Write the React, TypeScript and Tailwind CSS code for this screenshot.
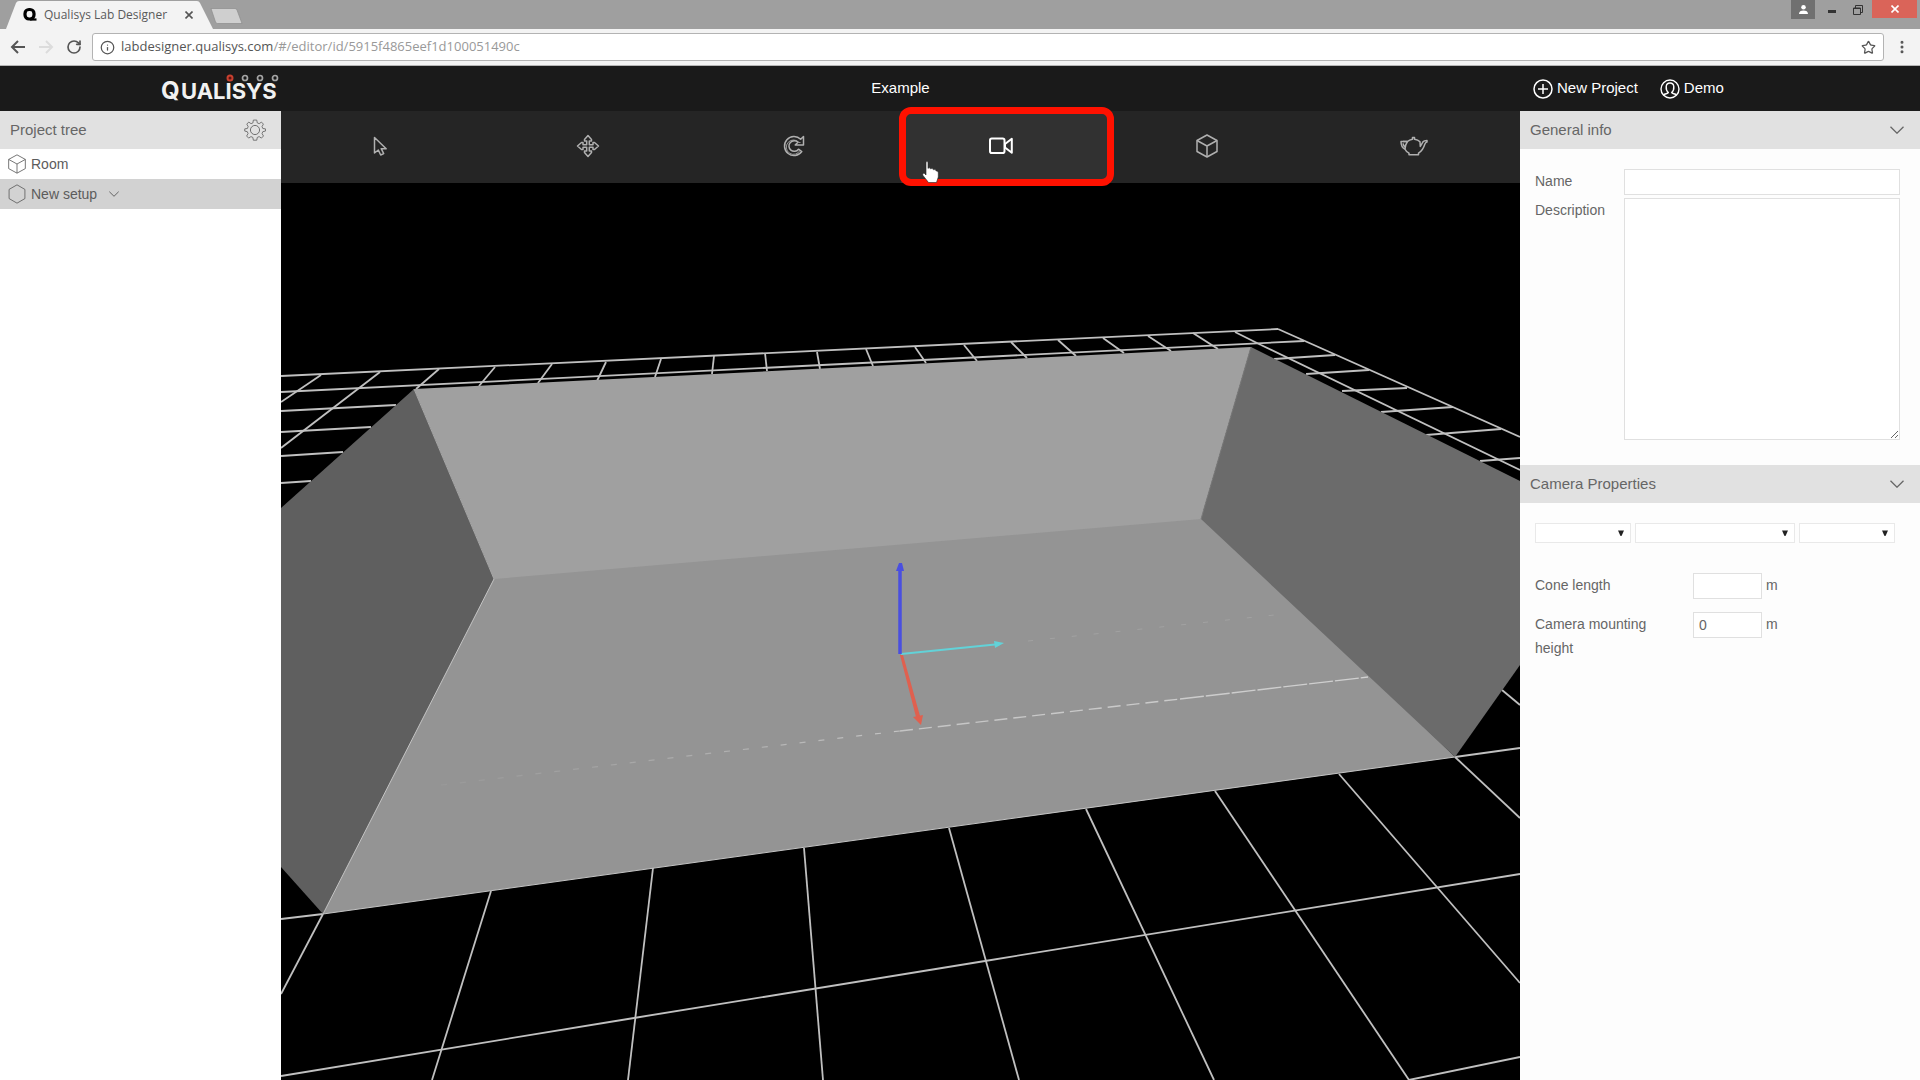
import { useState } from "react";
import type { ReactNode } from "react";
import { Info, MoreVertical, RotateCw, Star } from "lucide-react";

type Segment = [number, number, number, number];

// Floor grid lines, in the same space as the room polygons
const gridLines: Segment[] = [
  // far rows
  [281, 376, 1278, 329],
  [281, 392, 1304, 341],
  [281, 411, 396, 405],
  [281, 432, 371, 427],
  [281, 456, 343, 452],
  [281, 483, 311, 481],
  // far columns
  [321, 375, 281, 402],
  [380, 372, 281, 448],
  [439, 369, 416, 389],
  [495, 367, 479, 386],
  [552, 364, 538, 383],
  [606, 362, 597, 381],
  [661, 359, 655, 377],
  [714, 356, 712, 374],
  [765, 353, 767, 371],
  [817, 352, 820, 369],
  [866, 349, 873, 366],
  [915, 347, 926, 363],
  [964, 345, 977, 361],
  [1011, 342, 1027, 358],
  [1058, 340, 1076, 356],
  [1103, 338, 1124, 353],
  [1148, 336, 1171, 351],
  [1193, 333, 1218, 349],
  [1235, 332, 1261, 345],
  // right side
  [1278, 329, 1520, 437],
  [1261, 345, 1520, 470],
  [1274, 359, 1335, 355],
  [1306, 374, 1369, 370],
  [1342, 391, 1407, 388],
  [1381, 412, 1453, 407],
  [1426, 435, 1501, 429],
  [1480, 461, 1520, 458],
  [1502, 690, 1520, 705],
  // near columns
  [323, 914, 281, 994],
  [491, 891, 432, 1080],
  [653, 868, 628, 1080],
  [804, 848, 823, 1080],
  [949, 828, 1019, 1080],
  [1086, 809, 1214, 1080],
  [1215, 791, 1409, 1080],
  [1339, 774, 1520, 983],
  [1455, 757, 1520, 818],
  // near rows
  [281, 919, 323, 914],
  [1455, 757, 1520, 748],
  [281, 1076, 634, 1018],
  [634, 1018, 985, 961],
  [985, 961, 1520, 874],
  [1409, 1080, 1520, 1057],
];

const Scene = () => (
  <svg
    viewBox="281 183 1239 897"
    preserveAspectRatio="xMidYMid slice"
    className="block h-full w-full bg-black"
    role="img"
    aria-label="Room view"
  >
    <defs>
      <linearGradient id="seam" gradientUnits="userSpaceOnUse" x1="441" y1="785" x2="1368" y2="677">
        <stop offset="0" stopColor="#b4b4b4" stopOpacity="0.15" />
        <stop offset="0.5" stopColor="#c4c4c4" />
        <stop offset="1" stopColor="#d0d0d0" />
      </linearGradient>
    </defs>
    <g stroke="#c0c0c0" strokeWidth="1.8">
      {gridLines.map(([x1, y1, x2, y2], i) => (
        <line key={i} x1={x1} y1={y1} x2={x2} y2={y2} />
      ))}
    </g>
    {/* the floor reaches under the walls so that no seam shows */}
    <polygon points="484,570 1201,509 1211,519 1455,757 323,914" fill="#949494" />
    <polygon points="414,389 1251,347 1201,519 494,579" fill="#a0a0a0" />
    <polygon points="281,508 414,389 494,579 323,914 281,867" fill="#5f5f5f" />
    <polygon points="1251,347 1520,481 1520,665 1455,757 1201,519" fill="#6b6b6b" />
    <g fill="none" stroke="#c4c4c4" strokeWidth="1">
      <path d="M494 579 323 914 1455 757" />
      <path d="M414 389 494 579" stroke="#a8a8a8" />
      <path d="M1251 347 1201 519" stroke="#7c7c7c" />
    </g>
    <path d="M441 785 900 731" stroke="url(#seam)" strokeWidth="1.2" strokeDasharray="6 13" />
    <path d="M900 731 1180 699" stroke="url(#seam)" strokeWidth="1.4" strokeDasharray="13 6" />
    <path d="M1180 699 1368 677" stroke="url(#seam)" strokeWidth="1.4" strokeDasharray="24 2" />
    <path d="M1028 641 1284 614" stroke="#a2a2a2" strokeWidth="1" strokeDasharray="5 17" />
    <path d="M901 654 1000 644" stroke="#62d2d8" strokeWidth="2" />
    <path d="M994 641 1004 643 995 648Z" fill="#62d2d8" />
    <path d="M900 655 903 655 920 716 916 717Z" fill="#e0604f" />
    <path d="M913 717 923 715 921 725Z" fill="#e0604f" />
    <path d="M900 569V654" stroke="#4a4fe0" strokeWidth="3.5" />
    <path d="M896 571 899 563H902L904 571Z" fill="#4a4fe0" />
  </svg>
);

const CubeIcon = ({ className }: { className: string }) => (
  <svg viewBox="0 0 24 24" className={className} fill="none" stroke="currentColor" strokeLinejoin="round">
    <path d="M12 1 22 6.5V17.5L12 23 2 17.5V6.5Z" />
    <path d="M2 6.5 12 12 22 6.5M12 12V23" />
  </svg>
);

const HexagonIcon = () => (
  <svg viewBox="0 0 24 24" className="h-5 w-5" fill="none" stroke="currentColor" strokeLinejoin="round">
    <path d="M12 1 21.500 6.500V17.500L12 23 2.500 17.500V6.500Z" />
  </svg>
);

const GearIcon = () => (
  <svg viewBox="0 0 24 24" className="h-[22px] w-[22px]" fill="none" stroke="currentColor" strokeLinejoin="round">
    <circle cx="12" cy="12" r="5" />
    <path d="M10 1h4l.6 3.200 2.200.9 2.700-1.800 2.300 2.300-1.600 2.800.9 2.200 3.100.4v2.500l-3.100.7-.9 2.200 1.700 2.700-2.400 2.400-2.700-1.700-2.200.9-.6 3.200h-4l-.6-3.200-2.200-.9-2.700 1.700-2.400-2.400 1.700-2.700-.9-2.200L-.1 13.500V11l3.100-.4.9-2.200L2.300 5.600l2.300-2.300 2.700 1.800 2.200-.9Z" transform="translate(.9 .2) scale(.93 .96)" />
  </svg>
);

const ChevronIcon = ({ className }: { className: string }) => (
  <svg viewBox="0 0 14 8" className={className} fill="none" stroke="currentColor" strokeWidth="1.300">
    <path d="M.5.8 7 7.200 13.500.8" />
  </svg>
);

const PointerIcon = () => (
  <svg viewBox="0 0 24 24" className="h-6 w-6" fill="none" stroke="currentColor" strokeWidth="1.500" strokeLinejoin="round">
    <path d="M5.500 3.500V19l3.800-3 2.400 5 3-1.400-2.500-4.900h5Z" />
  </svg>
);

const MoveIcon = () => (
  <svg viewBox="0 0 24 24" className="h-6 w-6" fill="none" stroke="currentColor" strokeWidth="1.500" strokeLinejoin="round">
    <path d="M12 1.500 15.500 5.500V7H13.300V10.700H17V8.500H18.500L22.500 12 18.500 15.500H17V13.300H13.300V17H15.500V18.500L12 22.500 8.500 18.500V17H10.700V13.300H7V15.500H5.500L1.500 12 5.500 8.500H7V10.700H10.700V7H8.500V5.500Z" />
  </svg>
);

const RotateIcon = () => (
  <svg viewBox="0 0 24 24" className="h-6 w-6" fill="none" stroke="currentColor" strokeWidth="1.500" strokeLinejoin="round">
    <path d="M21.500 2.500V11H13.200L16 8.300A5.300 5.300 0 1 0 16.500 15.200L19.800 17.500A9.500 9.500 0 1 1 18.700 5.300Z" />
    <path d="M18.500 8.500H17A7.200 7.200 0 1 0 18 16.300" strokeWidth=".8" />
  </svg>
);

const CameraIcon = () => (
  <svg viewBox="0 0 26 24" className="h-6 w-[26px]" fill="none" stroke="currentColor" strokeWidth="2" strokeLinejoin="round">
    <rect x="2" y="4.500" width="14.500" height="14.500" rx="1.800" />
    <path d="M17 10 23.800 4.800V18.700L17 13.500Z" />
  </svg>
);

const TeapotIcon = () => (
  <svg viewBox="0 0 28 24" className="h-6 w-7" fill="none" stroke="currentColor" strokeWidth="1.500" strokeLinejoin="round">
    <path d="M7.500 7.500C9 6 10.500 5.500 12.500 5.200V3.500H14.500V5.200C17 5.500 18.500 6.200 20 7.800L20.300 12.500 23 7.800C23.700 6.800 24.500 6.500 27 6.500V8C25.500 8.300 25.200 9 24.800 10.200 23.500 14.500 21.800 17 18.500 19.200V20.700H9V19.200C6.800 18 5.800 17 5 15.200 2.500 14 1 11 1 7.500Z" />
    <path d="M7.500 7.500C6 9.500 5.200 12 5 15M3 9.300C3.300 11 3.800 12 4.800 13M7.500 7.500H3" />
  </svg>
);

const HandCursor = () => (
  <svg viewBox="0 0 17 22" className="h-[22px] w-[17px]" fill="white" stroke="#222" strokeWidth=".6">
    <path d="M4 1.500C4 .3 6 .3 6 1.500V7.500C6.500 6.500 8.500 6.700 8.700 8 9.500 7.200 11.300 7.500 11.500 8.800 12.500 8.300 14 8.800 14.200 10 15.500 10 16.300 10.600 16.300 12V16L14.500 21.500H6.500L1 14.500C.2 13 1.200 11.800 2.500 12.500L4 14Z" />
  </svg>
);

const Logo = () => (
  <svg viewBox="0 0 120 38" className="h-[38px] w-[120px] overflow-visible" role="img" aria-label="Qualisys">
    <g fill="#f1f1f1" fontFamily="Inter, sans-serif" fontWeight="700">
      <text x="0" y="29" fontSize="24">Q</text>
      <text x="20" y="29" fontSize="22">UALISYS</text>
    </g>
    <circle cx="69" cy="8" r="2.500" fill="#5a1512" stroke="#c8402f" strokeWidth="2" />
    <g fill="none" stroke="#a5a5a5" strokeWidth="1.700">
      <circle cx="84" cy="8" r="2.500" />
      <circle cx="99" cy="8" r="2.500" />
      <circle cx="114" cy="8" r="2.500" />
    </g>
  </svg>
);

const BrowserChrome = () => (
  <div className="font-['Open_Sans',sans-serif]">
    <div className="flex h-[29px] items-end justify-between bg-[#9f9f9f]">
      <div className="flex h-full items-end">
        <div className="relative ml-[6px] h-[28px] w-[207px]">
          <svg viewBox="0 0 207 28" className="absolute inset-0 h-full w-full" aria-hidden="true">
            <path d="M0 28 10 2Q11 0 13 0H191Q193 0 194 2L207 28Z" fill="#f3f3f3" />
          </svg>
          <div className="relative flex h-full items-center pl-[16px] pr-[20px]">
            <svg viewBox="0 0 16 16" className="h-4 w-4" fill="none" stroke="black" strokeWidth="3.200" aria-hidden="true">
              <rect x="3" y="2.500" width="9" height="9.500" rx="4" />
              <path d="M8 12.500H14.500" strokeWidth="2.200" />
            </svg>
            <span className="ml-[6px] text-xs text-[#5a5a5a]">Qualisys Lab Designer</span>
            <button type="button" aria-label="Close tab" className="ml-auto text-[#555]">
              <svg viewBox="0 0 8 8" className="h-2 w-2" stroke="currentColor" strokeWidth="1.600">
                <path d="M.5.5 7.500 7.500M7.500.5.5 7.500" />
              </svg>
            </button>
          </div>
        </div>
        <button type="button" aria-label="New tab" className="mb-[5px] -ml-[3px]">
          <svg viewBox="0 0 33 16" className="block h-4 w-[33px]">
            <path d="M1 .5H25Q26.500.5 27 2L32 15.500H7.500Q6 15.500 5.500 14Z" fill="#cfcfcf" stroke="#8c8c8c" strokeWidth=".7" />
          </svg>
        </button>
      </div>
      <div className="flex h-full items-start pr-[3px]">
        <button type="button" aria-label="Profile" className="flex h-[19px] w-6 items-center justify-center bg-[#707070]">
          <svg viewBox="0 0 10 10" className="h-[9px] w-[9px]" fill="white">
            <circle cx="5" cy="2.500" r="2.500" />
            <path d="M0 10C0 7 2 6 5 6S10 7 10 10Z" />
          </svg>
        </button>
        <button type="button" aria-label="Minimize" className="flex h-[19px] w-[33px] items-center justify-center pt-1">
          <span className="h-[3px] w-2 bg-[#333]" />
        </button>
        <button type="button" aria-label="Restore" className="flex h-[19px] w-5 items-center justify-center">
          <svg viewBox="0 0 10 10" className="h-[10px] w-[10px]" fill="none" stroke="#333">
            <path d="M.500 3H7.500V9.500H.500ZM.500 3.500H7.500M2.500 3V.500H9.500V7.500H7.500" />
          </svg>
        </button>
        <button type="button" aria-label="Close" className="ml-1 flex h-[18px] w-[45px] items-center justify-center bg-[#da6459]">
          <svg viewBox="0 0 8 8" className="h-2 w-2" stroke="white" strokeWidth="1.600">
            <path d="M.5.5 7.500 7.500M7.500.5.5 7.500" />
          </svg>
        </button>
      </div>
    </div>
    <div className="flex h-[37px] items-center border-b border-[#b5b5b5] bg-[#f3f3f3]">
      <button type="button" aria-label="Back" className="ml-[10px] text-[#555]">
        <svg viewBox="0 0 16 14" className="h-[14px] w-4" fill="none" stroke="currentColor" strokeWidth="2">
          <path d="M15 7H2M8 1 2 7 8 13" />
        </svg>
      </button>
      <button type="button" aria-label="Forward" className="ml-3 text-[#dcdcdc]">
        <svg viewBox="0 0 16 14" className="h-[14px] w-4" fill="none" stroke="currentColor" strokeWidth="2">
          <path d="M1 7H14M8 1 14 7 8 13" />
        </svg>
      </button>
      <button type="button" aria-label="Reload" className="ml-3 text-[#555]">
        <RotateCw className="h-4 w-4" strokeWidth={2.5} />
      </button>
      <div className="ml-[10px] flex h-7 flex-1 items-center rounded-[3px] border border-[#b3b3b3] bg-white px-[7px]">
        <Info className="h-[15px] w-[15px] text-[#555]" strokeWidth={2} />
        <div className="ml-[6px] flex-1 text-[13px] text-[#999]">
          <span className="text-[#555]">labdesigner.qualisys.com</span>/#/editor/id/5915f4865eef1d100051490c
        </div>
        <button type="button" aria-label="Bookmark" className="text-[#555]">
          <Star className="h-[15px] w-[15px]" strokeWidth={2} />
        </button>
      </div>
      <button type="button" aria-label="Menu" className="mx-[10px] text-[#555]">
        <MoreVertical className="h-4 w-4" strokeWidth={2.500} />
      </button>
    </div>
  </div>
);

const tools: { id: string; label: string; icon: ReactNode }[] = [
  { id: "select", label: "Select", icon: <PointerIcon /> },
  { id: "move", label: "Move", icon: <MoveIcon /> },
  { id: "rotate", label: "Rotate", icon: <RotateIcon /> },
  { id: "camera", label: "Add camera", icon: <CameraIcon /> },
  { id: "box", label: "Add box", icon: <CubeIcon className="h-6 w-6 stroke-[1.5]" /> },
  { id: "object", label: "Add object", icon: <TeapotIcon /> },
];

const Toolbar = () => {
  const [hovered, setHovered] = useState("camera");

  return (
    <div className="grid h-[72px] grid-cols-6 bg-[#252525]">
      {tools.map((tool) => (
        <button
          key={tool.id}
          type="button"
          aria-label={tool.label}
          onMouseEnter={() => setHovered(tool.id)}
          className={
            tool.id === hovered
              ? "relative flex items-center justify-center bg-[#313131] pr-[6px] pb-[3px] text-white"
              : "relative flex items-center justify-center pr-[6px] pb-[3px] text-[#b0b0b0]"
          }
        >
          {tool.icon}
          {tool.id === "camera" && (
            <>
              <span className="absolute -top-1 -right-[7px] -bottom-[3px] -left-[2px] z-10 rounded-xl border-[7px] border-[#ff1100]" />
              <span className="absolute bottom-0 left-[21px] z-20">
                <HandCursor />
              </span>
            </>
          )}
        </button>
      ))}
    </div>
  );
};

const PanelHeader = ({ title }: { title: string }) => (
  <h2>
    <button
      type="button"
      className="flex h-[38px] w-full items-center justify-between bg-[#e1e1e1] pr-4 pl-[10px] text-[15px] text-[#666]"
    >
      {title}
      <ChevronIcon className="h-2 w-[14px]" />
    </button>
  </h2>
);

const SelectBox = ({ label, className }: { label: string; className: string }) => (
  <div className={className}>
    <select aria-label={label} className="block h-5 w-full appearance-none border border-[#e9e9e9] bg-white" />
    <svg viewBox="0 0 6 6" className="pointer-events-none absolute top-[7px] right-[7px] h-[6px] w-[6px]" fill="#222">
      <path d="M0 .5H6L3.500 6H2.500Z" />
    </svg>
  </div>
);

const PropertiesPanel = () => {
  const [name, setName] = useState("");
  const [description, setDescription] = useState("");
  const [coneLength, setConeLength] = useState("");
  const [mountingHeight, setMountingHeight] = useState("0");

  return (
    <aside className="w-[400px] shrink-0 bg-[#fdfdfd] text-sm text-[#666]">
      <PanelHeader title="General info" />
      <div className="flex flex-col gap-[3px] pt-5 pr-5 pb-[25px] pl-[15px]">
        <div className="flex">
          <label htmlFor="name" className="w-[89px] leading-6">
            Name
          </label>
          <input
            id="name"
            value={name}
            onChange={(e) => setName(e.target.value)}
            className="h-[26px] min-w-0 flex-1 border border-[#e0e0e0] bg-white px-[5px]"
          />
        </div>
        <div className="flex">
          <label htmlFor="description" className="w-[89px] leading-6">
            Description
          </label>
          <textarea
            id="description"
            value={description}
            onChange={(e) => setDescription(e.target.value)}
            className="block h-[242px] min-w-0 flex-1 resize border border-[#e0e0e0] bg-white px-[5px]"
          />
        </div>
      </div>

      <PanelHeader title="Camera Properties" />
      <div className="pt-5 pl-[15px]">
        <div className="flex gap-1">
          <SelectBox label="Camera family" className="relative w-24" />
          <SelectBox label="Camera model" className="relative w-40" />
          <SelectBox label="Lens" className="relative w-24" />
        </div>
        <div className="mt-[30px] flex flex-col gap-[13px]">
          <div className="flex">
            <label htmlFor="cone" className="mr-7 w-[130px] leading-6">
              Cone length
            </label>
            <input
              id="cone"
              value={coneLength}
              onChange={(e) => setConeLength(e.target.value)}
              className="h-[26px] w-[69px] border border-[#e0e0e0] bg-white px-[5px]"
            />
            <span className="ml-1 leading-6">m</span>
          </div>
          <div className="flex">
            <label htmlFor="mounting" className="mr-7 w-[130px] leading-6">
              Camera mounting height
            </label>
            <input
              id="mounting"
              value={mountingHeight}
              onChange={(e) => setMountingHeight(e.target.value)}
              className="h-[26px] w-[69px] border border-[#e0e0e0] bg-white px-[5px]"
            />
            <span className="ml-1 leading-6">m</span>
          </div>
        </div>
      </div>
    </aside>
  );
};

const ProjectTree = () => (
  <aside className="w-[281px] shrink-0 bg-white text-sm text-[#5c5c5c]">
    <div className="flex h-[38px] items-center justify-between bg-[#e1e1e1] pr-[15px] pl-[10px] text-[15px] text-[#666]">
      <h2>Project tree</h2>
      <button type="button" aria-label="Settings">
        <GearIcon />
      </button>
    </div>
    <ul>
      <li>
        <button type="button" className="flex h-[30px] w-full items-center gap-1 pl-[7px]">
          <CubeIcon className="h-5 w-5" />
          Room
        </button>
      </li>
      <li>
        <button type="button" className="flex h-[30px] w-full items-center gap-1 bg-[#d2d2d2] pl-[7px]">
          <HexagonIcon />
          New setup
          <ChevronIcon className="ml-2 h-[6px] w-[10px]" />
        </button>
      </li>
    </ul>
  </aside>
);

const AppHeader = () => (
  <header className="flex h-[45px] items-center bg-[#1a1a1a] text-[15px] text-white">
    <div className="flex w-[281px] shrink-0 justify-end">
      <Logo />
    </div>
    <h1 className="flex-1 text-center">Example</h1>
    <nav className="flex w-[400px] shrink-0 items-center pl-[13px]">
      <a href="#new" className="flex items-center gap-1">
        <svg viewBox="0 0 20 20" className="h-5 w-5" fill="none" stroke="currentColor" strokeWidth="1.500">
          <circle cx="10" cy="10" r="9" />
          <path d="M10 5V15M5 10H15" />
        </svg>
        New Project
      </a>
      <a href="#demo" className="ml-[22px] flex items-center gap-1">
        <svg viewBox="0 0 20 20" className="h-5 w-5" fill="none" stroke="currentColor" strokeWidth="1.400">
          <circle cx="10" cy="10" r="9" />
          <path d="M3.500 16C5 14.500 8 15 8.300 13.500 6.500 12 6 10 6.200 7.500 6.500 5 8 4 10 4S13.500 5 13.800 7.500C14 10 13.500 12 11.700 13.500 12 15 15 14.500 16.500 16" />
        </svg>
        Demo
      </a>
    </nav>
  </header>
);

const App = () => (
  <div className="flex h-screen flex-col overflow-hidden bg-white font-['Liberation_Sans',Arial,sans-serif]">
    <BrowserChrome />
    <AppHeader />
    <div className="flex min-h-0 flex-1">
      <ProjectTree />
      <main className="flex min-w-0 flex-1 flex-col">
        <Toolbar />
        <div className="min-h-0 flex-1">
          <Scene />
        </div>
      </main>
      <PropertiesPanel />
    </div>
  </div>
);

export default App;
